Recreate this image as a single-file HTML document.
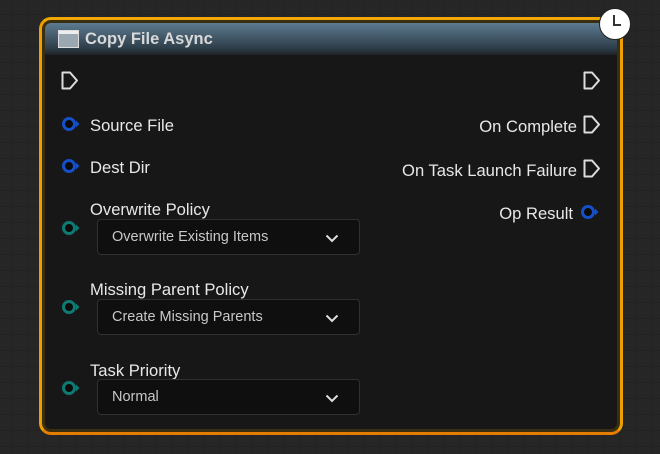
<!DOCTYPE html>
<html><head><style>
body{margin:0;width:660px;height:454px;overflow:hidden;background:#262626;
background-image:linear-gradient(#222 1px,transparent 1px),linear-gradient(90deg,#222 1px,transparent 1px);
background-size:16px 16px;background-position:-4px -2px;font-family:"Liberation Sans",sans-serif;position:relative}
.node{position:absolute;left:39px;top:17px;width:578px;height:412px;border:3px solid #f0a800;border-radius:12px;
border-bottom-color:#e57d00;border-left-color:#eea000;border-right-color:#eea000;background:#3a2e10}
.inner{position:absolute;left:3px;top:3px;right:3px;bottom:3px;background:#161716;border-radius:6px;overflow:hidden}
.hdr{position:absolute;left:0;top:0;right:0;height:32px;background:linear-gradient(#5d7a90,#2d3d48 80%,#1c2124)}
.t{position:absolute;color:#e8e8e8;font-size:16.6px;white-space:nowrap}
.ht{position:absolute;left:40px;top:7px;color:#d8d8d8;font-weight:bold;font-size:16.5px}
.dd{position:absolute;left:97px;width:263px;height:36px;border:1px solid #303030;border-radius:4px;background:#0f0f0f;box-sizing:border-box}
.dd span{position:absolute;left:14px;top:9px;color:#c8c8c8;font-size:14.5px}
.dd svg{position:absolute;right:20px;top:14px}
svg{position:absolute}
</style></head><body>
<div class="node"><div class="inner"><div class="hdr">
<div style="position:absolute;left:13px;top:7px;width:21px;height:18px;border:1px solid #ddd;background:linear-gradient(#eee 0 3px,#9aa8b2 3px);box-sizing:border-box"></div>
<div class="ht">Copy File Async</div></div></div></div>
<svg style="left:598px;top:7px" width="34" height="34"><circle cx="17" cy="17" r="15.5" fill="#fff" stroke="#222" stroke-width="1"/><path d="M16 8V18H23" stroke="#333" stroke-width="2" fill="none"/></svg>
<svg style="left:61px;top:71px" width="20" height="20"><path d="M1.5 1.5H9L16 9.5L9 17.5H1.5Z" fill="none" stroke="#ddd" stroke-width="2" stroke-linejoin="round"/></svg>
<svg style="left:583px;top:71px" width="20" height="20"><path d="M1.5 1.5H9L16 9.5L9 17.5H1.5Z" fill="none" stroke="#ddd" stroke-width="2" stroke-linejoin="round"/></svg>
<svg style="left:583px;top:115px" width="20" height="20"><path d="M1.5 1.5H9L16 9.5L9 17.5H1.5Z" fill="none" stroke="#ddd" stroke-width="2" stroke-linejoin="round"/></svg>
<svg style="left:583px;top:159px" width="20" height="20"><path d="M1.5 1.5H9L16 9.5L9 17.5H1.5Z" fill="none" stroke="#ddd" stroke-width="2" stroke-linejoin="round"/></svg>
<svg style="left:61px;top:116px" width="20" height="16"><circle cx="8" cy="8" r="5.5" fill="#0b0b0b" stroke="#1550c8" stroke-width="3"/><path d="M15 4.5L18.5 8L15 11.5Z" fill="#1550c8"/></svg>
<svg style="left:61px;top:158px" width="20" height="16"><circle cx="8" cy="8" r="5.5" fill="#0b0b0b" stroke="#1550c8" stroke-width="3"/><path d="M15 4.5L18.5 8L15 11.5Z" fill="#1550c8"/></svg>
<svg style="left:580px;top:204px" width="20" height="16"><circle cx="8" cy="8" r="5.5" fill="#0b0b0b" stroke="#1550c8" stroke-width="3"/><path d="M15 4.5L18.5 8L15 11.5Z" fill="#1550c8"/></svg>
<svg style="left:61px;top:220px" width="20" height="16"><circle cx="8" cy="8" r="5.5" fill="#0b0b0b" stroke="#0e7a72" stroke-width="3"/><path d="M15 4.5L18.5 8L15 11.5Z" fill="#0e7a72"/></svg>
<svg style="left:61px;top:299px" width="20" height="16"><circle cx="8" cy="8" r="5.5" fill="#0b0b0b" stroke="#0e7a72" stroke-width="3"/><path d="M15 4.5L18.5 8L15 11.5Z" fill="#0e7a72"/></svg>
<svg style="left:61px;top:380px" width="20" height="16"><circle cx="8" cy="8" r="5.5" fill="#0b0b0b" stroke="#0e7a72" stroke-width="3"/><path d="M15 4.5L18.5 8L15 11.5Z" fill="#0e7a72"/></svg>
<div class="t" style="left:90px;top:116px">Source File</div>
<div class="t" style="left:90px;top:158px">Dest Dir</div>
<div class="t" style="right:83px;top:117px">On Complete</div>
<div class="t" style="right:83px;top:161px">On Task Launch Failure</div>
<div class="t" style="right:87px;top:204px">Op Result</div>
<div class="t" style="left:90px;top:200px">Overwrite Policy</div>
<div class="t" style="left:90px;top:280px">Missing Parent Policy</div>
<div class="t" style="left:90px;top:361px">Task Priority</div>
<div class="dd" style="top:219px"><span>Overwrite Existing Items</span><svg width="14" height="9"><path d="M1.5 1.5L7 7L12.5 1.5" fill="none" stroke="#ddd" stroke-width="2"/></svg></div>
<div class="dd" style="top:299px"><span>Create Missing Parents</span><svg width="14" height="9"><path d="M1.5 1.5L7 7L12.5 1.5" fill="none" stroke="#ddd" stroke-width="2"/></svg></div>
<div class="dd" style="top:379px"><span>Normal</span><svg width="14" height="9"><path d="M1.5 1.5L7 7L12.5 1.5" fill="none" stroke="#ddd" stroke-width="2"/></svg></div>
</body></html>
